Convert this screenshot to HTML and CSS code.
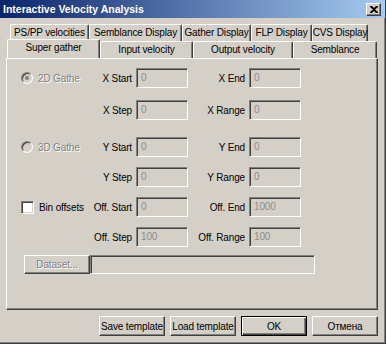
FILE: index.html
```html
<!DOCTYPE html>
<html lang="en">
<head>
    <meta charset="UTF-8">
    <title>Interactive Velocity Analysis</title>
    <link rel="stylesheet" href="styles.css">
</head>
<body>
    <div class="window">
        <div class="titlebar">
            <span class="title">Interactive Velocity Analysis</span>
            <div class="close">
                <svg width="8" height="7" viewBox="0 0 8 7">
                    <path d="M0 0h2l2 2 2-2h2v1L5 3.5 8 6v1H6L4 5 2 7H0V6l3-2.5L0 1z" fill="#000"/>
                </svg>
            </div>
        </div>

        <div class="tabs">
            <div class="tab-row back">
                <div class="tab t-psp">PS/PP velocities</div>
                <div class="tab t-sem">Semblance Display</div>
                <div class="tab t-gat">Gather Display</div>
                <div class="tab t-flp">FLP Display</div>
                <div class="tab t-cvs">CVS Display</div>
            </div>
            <div class="tab-row front">
                <div class="tab active t-sup">Super gather</div>
                <div class="tab t-inp">Input velocity</div>
                <div class="tab t-out">Output velocity</div>
                <div class="tab t-smb">Semblance</div>
            </div>
        </div>

        <div class="panel">
            <div class="row r1">
                <div class="option disabled"><span class="radio checked"></span>2D Gathe</div>
                <label class="lbl">X Start</label>
                <div class="field">0</div>
                <label class="lbl">X End</label>
                <div class="field">0</div>
            </div>
            <div class="row r2">
                <div class="option"></div>
                <label class="lbl">X Step</label>
                <div class="field">0</div>
                <label class="lbl">X Range</label>
                <div class="field">0</div>
            </div>
            <div class="row r3">
                <div class="option disabled"><span class="radio"></span>3D Gathe</div>
                <label class="lbl">Y Start</label>
                <div class="field">0</div>
                <label class="lbl">Y End</label>
                <div class="field">0</div>
            </div>
            <div class="row r4">
                <div class="option"></div>
                <label class="lbl">Y Step</label>
                <div class="field">0</div>
                <label class="lbl">Y Range</label>
                <div class="field">0</div>
            </div>
            <div class="row r4">
                <div class="option"><span class="check"></span>Bin offsets</div>
                <label class="lbl">Off. Start</label>
                <div class="field">0</div>
                <label class="lbl">Off. End</label>
                <div class="field">1000</div>
            </div>
            <div class="row r4">
                <div class="option"></div>
                <label class="lbl">Off. Step</label>
                <div class="field">100</div>
                <label class="lbl">Off. Range</label>
                <div class="field">100</div>
            </div>
            <div class="dataset-row">
                <div class="btn dataset">Dataset...</div>
                <div class="path"></div>
            </div>
        </div>

        <div class="actions">
            <div class="btn">Save template</div>
            <div class="btn">Load template</div>
            <div class="btn default">OK</div>
            <div class="btn">Отмена</div>
        </div>
    </div>
</body>
</html>
```

FILE: styles.css
```css
* {
    padding: 0;
    margin: 0;
    box-sizing: border-box;
}

body {
    width: 386px;
    height: 344px;
    overflow: hidden;
    background-color: #d4d0c8;
    font-family: "Liberation Sans", Arial, sans-serif;
    font-size: 10px;
    letter-spacing: -0.15px;
    color: #000000;
}

.window {
    width: 386px;
    height: 344px;
    background-color: #d4d0c8;
    border-right: 1px solid #404040;
    border-bottom: 1px solid #404040;
    box-shadow: inset -1px -1px #808080;
}

/* title bar */
.titlebar {
    height: 18px;
    display: flex;
    align-items: center;
    justify-content: space-between;
    padding: 0 4px 0 3px;
    background: linear-gradient(to right, #0a246a, #a6caf0);
}

.title {
    color: #ffffff;
    font-weight: bold;
    font-size: 10.5px;
    letter-spacing: 0;
}

.close {
    width: 15px;
    height: 13px;
    display: flex;
    justify-content: center;
    align-items: center;
    background-color: #d4d0c8;
    border-top: 1px solid #ffffff;
    border-left: 1px solid #ffffff;
    border-right: 1px solid #404040;
    border-bottom: 1px solid #404040;
    box-shadow: inset -1px -1px #808080;
}

/* tabs */
.tabs {
    padding-top: 6px;
}

.tab-row {
    display: flex;
    height: 17px;
}

.tab-row.back {
    margin-left: 10px;
}

.tab-row.front {
    margin-left: 7px;
    position: relative;
    z-index: 1;
}

.tab {
    height: 17px;
    display: flex;
    justify-content: center;
    align-items: center;
    background-color: #d4d0c8;
    border-top: 1px solid #ffffff;
    border-left: 1px solid #ffffff;
    border-right: 1px solid #404040;
    box-shadow: inset -1px 0 #808080;
    border-radius: 2px 2px 0 0;
    padding-bottom: 1px;
    white-space: nowrap;
}

.tab.active {
    height: 19px;
    margin-top: -2px;
    padding-bottom: 0;
    align-items: flex-start;
    padding-top: 2px;
}

.t-psp { width: 79px; }
.t-sem { width: 93px; }
.t-gat { width: 69px; }
.t-flp { width: 61px; }
.t-cvs { width: 56px; }

.t-sup { width: 93px; }
.t-inp { width: 93px; }
.t-out { width: 100px; }
.t-smb { width: 84px; }

/* panel */
.panel {
    margin-left: 6px;
    width: 372px;
    height: 252px;
    border-top: 1px solid #ffffff;
    border-left: 1px solid #ffffff;
    border-right: 1px solid #404040;
    border-bottom: 1px solid #404040;
    box-shadow: inset -1px -1px #808080;
    padding-left: 14px;
}

.row {
    display: grid;
    grid-template-columns: 67px 48px 52px 61px 52px;
    height: 20px;
    align-items: center;
}

.r1 { margin-top: 9px; }
.r2 { margin-top: 12px; }
.r3 { margin-top: 17px; }
.r4 { margin-top: 10px; }

.option {
    display: flex;
    align-items: center;
    gap: 5px;
}

.option.disabled {
    color: #808080;
    text-shadow: 1px 1px #ffffff;
}

.radio {
    width: 12px;
    height: 12px;
    border-radius: 50%;
    border: 1px solid;
    border-color: #808080 #ffffff #ffffff #808080;
    box-shadow: inset 1px 1px #404040, inset -1px -1px #d4d0c8;
    background-color: #d4d0c8;
    display: flex;
    justify-content: center;
    align-items: center;
}

.radio.checked::after {
    content: "";
    width: 4px;
    height: 4px;
    border-radius: 50%;
    background-color: #808080;
}

.check {
    width: 13px;
    height: 13px;
    border: 1px solid;
    border-color: #808080 #ffffff #ffffff #808080;
    box-shadow: inset 1px 1px #404040, inset -1px -1px #d4d0c8;
    background-color: #ffffff;
}

.lbl {
    text-align: right;
    padding-right: 4px;
    white-space: nowrap;
}

.field {
    height: 20px;
    padding: 3px 0 0 4px;
    color: #8c8c8c;
    background-color: #d4d0c8;
    border: 1px solid;
    border-color: #808080 #ffffff #ffffff #808080;
    box-shadow: inset 1px 1px #404040, inset -1px -1px #d4d0c8;
}

.dataset-row {
    display: flex;
    margin-top: 8px;
    margin-left: 3px;
}

.path {
    width: 225px;
    height: 19px;
    border: 1px solid;
    border-color: #808080 #ffffff #ffffff #808080;
    box-shadow: inset 1px 1px #404040, inset -1px -1px #d4d0c8;
}

/* buttons */
.btn {
    height: 20px;
    display: flex;
    justify-content: center;
    align-items: center;
    background-color: #d4d0c8;
    border-top: 1px solid #ffffff;
    border-left: 1px solid #ffffff;
    border-right: 1px solid #404040;
    border-bottom: 1px solid #404040;
    box-shadow: inset -1px -1px #808080;
    white-space: nowrap;
}

.btn.dataset {
    width: 66px;
    height: 19px;
    color: #808080;
    text-shadow: 1px 1px #ffffff;
}

.actions {
    display: flex;
    justify-content: flex-end;
    gap: 5px;
    margin-top: 6px;
    padding-right: 7px;
}

.actions .btn {
    width: 66px;
}

.btn.default {
    border: 1px solid #000000;
    box-shadow: inset 1px 1px #ffffff, inset -1px -1px #404040, inset -2px -2px #808080;
}
```
